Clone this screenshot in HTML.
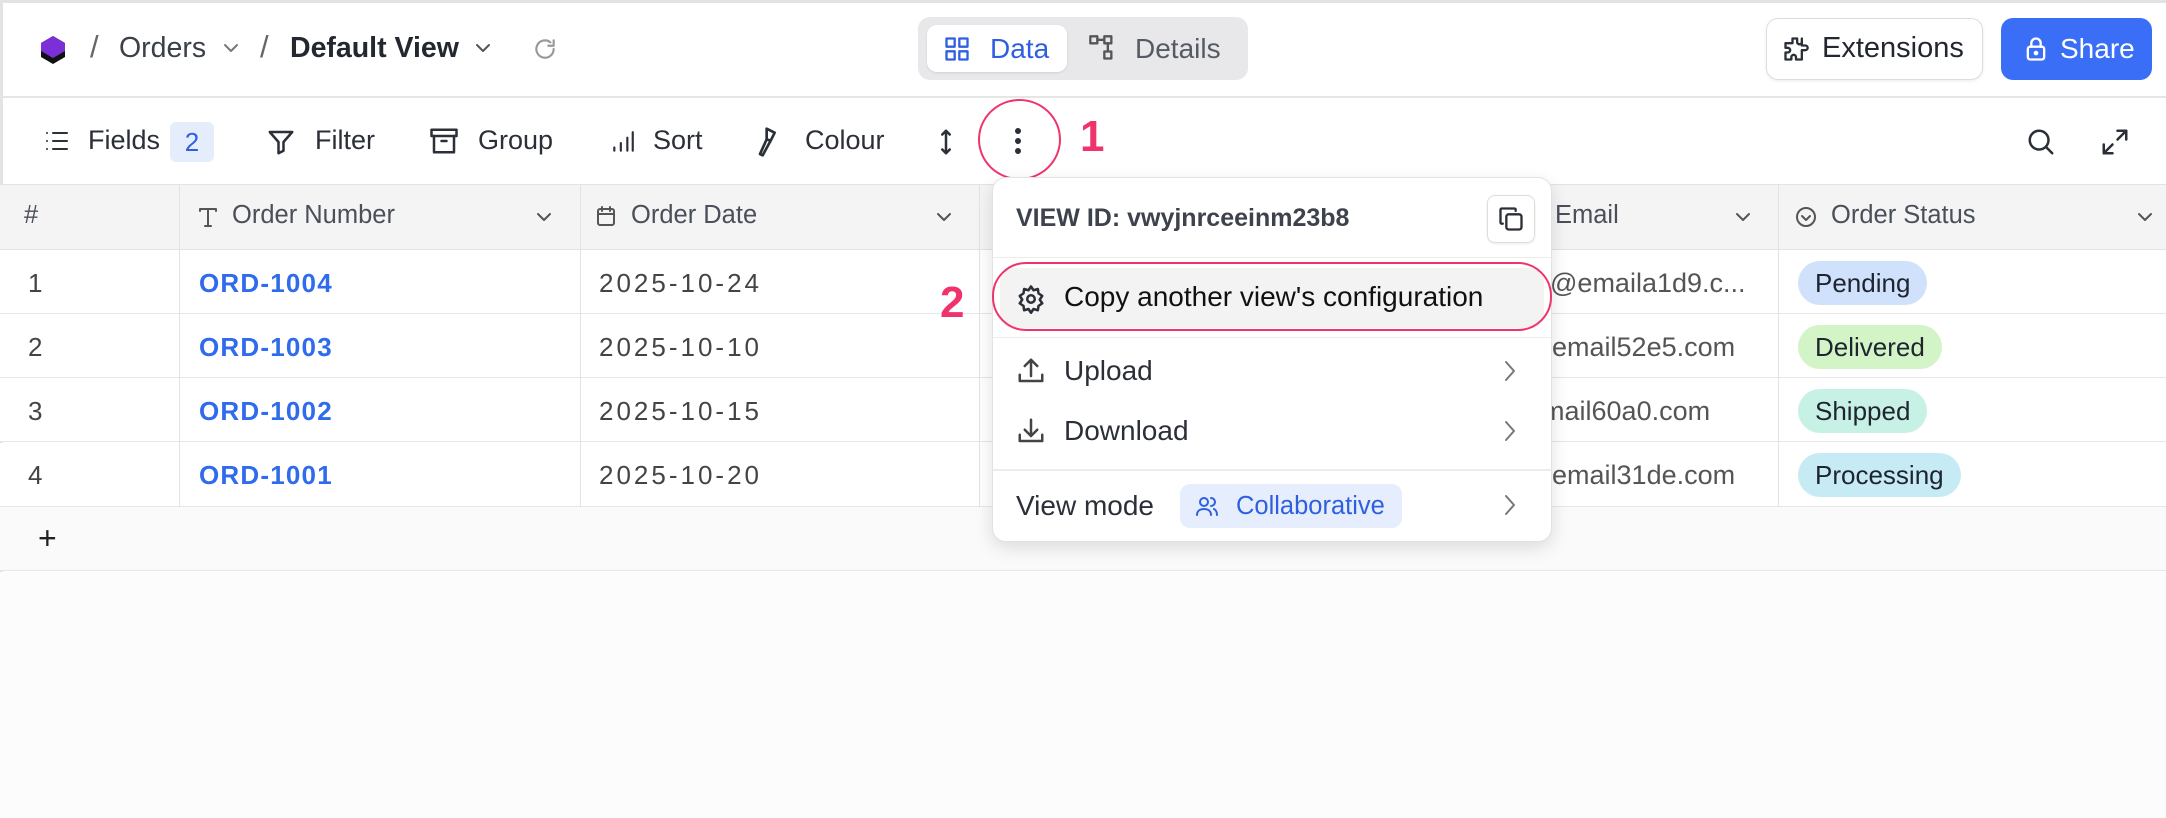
<!DOCTYPE html>
<html><head><meta charset="utf-8"><style>
*{box-sizing:border-box;margin:0;padding:0}
body{width:2166px;height:818px;overflow:hidden;background:#fff;font-family:"Liberation Sans",sans-serif;color:#2b2f38;position:relative}
.a{position:absolute;white-space:nowrap}
svg{position:absolute;fill:none;stroke:#2b2f38;stroke-width:2;stroke-linecap:round;stroke-linejoin:round}
.t{font-size:27px;top:125px}
.h{font-size:25.5px;color:#4a4f5a;top:201px}
.row{position:absolute;left:0;width:2166px;height:64px;border-bottom:1px solid #e6e6e6;background:#fff}
.c{font-size:26px}
.pill{position:absolute;left:1798px;height:44px;border-radius:22px;font-size:26px;line-height:44px;padding:0 17px;color:#1e2430}
</style></head><body>
<div class="a" style="left:0;top:0;width:2166px;height:3px;background:#e3e3e3"></div>
<div class="a" style="left:0;top:0;width:3px;height:818px;background:#e3e3e3"></div>
<!-- top bar -->
<svg style="left:38px;top:34px" width="30" height="32" viewBox="0 0 30 32"><path d="M15 2 L27 9 L27 23 L15 30 L3 23 L3 9Z" fill="#111" stroke="none"/><path d="M15 2 L27 9 L27 17 L15 24 L3 17 L3 9Z" fill="#7b2fd6" stroke="none"/></svg>
<div class="a" style="left:90px;top:29px;font-size:31px;color:#666">/</div>
<div class="a" style="left:119px;top:32px;font-size:28.5px;color:#3a3f48">Orders</div>
<svg style="left:222px;top:42px" width="18" height="12"><path d="M3 3l6 6 6-6" stroke="#777"/></svg>
<div class="a" style="left:260px;top:29px;font-size:31px;color:#666">/</div>
<div class="a" style="left:290px;top:32px;font-size:28.5px;font-weight:bold;color:#23272f">Default View</div>
<svg style="left:474px;top:42px" width="18" height="12"><path d="M3 3l6 6 6-6" stroke="#555"/></svg>
<svg style="left:532px;top:36px" width="26" height="26" viewBox="0 0 24 24"><path d="M20 12a8 8 0 1 1-3-6.2M20 4v5h-5" stroke="#999"/></svg>
<div class="a" style="left:918px;top:17px;width:330px;height:63px;border-radius:12px;background:#e8e8ea"></div>
<div class="a" style="left:927px;top:25px;width:140px;height:47px;border-radius:10px;background:#fff;box-shadow:0 1px 2px rgba(0,0,0,.1)"></div>
<svg style="left:943px;top:35px" width="28" height="28" viewBox="0 0 24 24"><rect x="3" y="3" width="7" height="7" stroke="#3060e0"/><rect x="14" y="3" width="7" height="7" stroke="#3060e0"/><rect x="3" y="14" width="7" height="7" stroke="#3060e0"/><rect x="14" y="14" width="7" height="7" stroke="#3060e0"/></svg>
<div class="a" style="left:990px;top:33px;font-size:28px;color:#2e5fe0">Data</div>
<svg style="left:1088px;top:34px" width="28" height="28" viewBox="0 0 24 24"><rect x="2" y="2" width="6" height="6" stroke="#555"/><rect x="14" y="2" width="6" height="6" stroke="#555"/><rect x="14" y="15" width="6" height="6" stroke="#555"/><path d="M8 5h6M17 8v7" stroke="#555"/></svg>
<div class="a" style="left:1135px;top:33px;font-size:28px;color:#555a64">Details</div>
<div class="a" style="left:1766px;top:18px;width:217px;height:62px;border:1px solid #ddd;border-radius:12px;box-shadow:0 1px 3px rgba(0,0,0,.08)"></div>
<svg style="left:1782px;top:35px" width="28" height="28" viewBox="0 0 24 24"><path d="M9 3h4v3a2 2 0 1 0 4 0V3h0v6h3a2 2 0 1 1 0 4h-3v8h-5v-2a2 2 0 1 0-4 0v2H3v-6h2a2 2 0 1 0 0-4H3V7h6z"/></svg>
<div class="a" style="left:1822px;top:32px;font-size:29px;color:#23272f">Extensions</div>
<div class="a" style="left:2001px;top:18px;width:151px;height:62px;background:#3a6ef7;border-radius:12px"></div>
<svg style="left:2024px;top:35px" width="24" height="28" viewBox="0 0 20 24"><rect x="3" y="10" width="14" height="11" rx="2" stroke="#fff"/><path d="M6 10V7a4 4 0 0 1 8 0v3" stroke="#fff"/><circle cx="10" cy="15.5" r="1" fill="#fff" stroke="#fff"/></svg>
<div class="a" style="left:2060px;top:33px;font-size:28px;color:#fff">Share</div>
<div class="a" style="left:0;top:96px;width:2166px;height:2px;background:#e5e5e5"></div>
<!-- toolbar -->
<svg style="left:44px;top:129px" width="26" height="24" viewBox="0 0 26 24"><path d="M3 4h0M3 12h0M3 20h0M9 4h14M9 12h14M9 20h14"/></svg>
<div class="a t" style="left:88px">Fields</div>
<div class="a" style="left:170px;top:122px;width:44px;height:40px;background:#e5edfd;border-radius:6px;color:#2e5fe0;font-size:26px;text-align:center;line-height:40px">2</div>
<svg style="left:266px;top:127px" width="30" height="30" viewBox="0 0 24 24"><path d="M3 4h18l-7 8v7l-4 2v-9z"/></svg>
<div class="a t" style="left:315px">Filter</div>
<svg style="left:428px;top:126px" width="32" height="30" viewBox="0 0 24 24"><rect x="2" y="3" width="20" height="5"/><path d="M4 8v13h16V8M10 12h4"/></svg>
<div class="a t" style="left:478px">Group</div>
<svg style="left:610px;top:127px" width="26" height="30" viewBox="0 0 24 24"><path d="M4 20v-3M10 20v-7M16 20V8M21 20V3"/></svg>
<div class="a t" style="left:653px">Sort</div>
<svg style="left:756px;top:125px" width="32" height="34" viewBox="0 0 24 24"><path d="M8 2l6 3-3 6-3-1zM11 11l-6 11-2-1 5-11"/></svg>
<div class="a t" style="left:805px">Colour</div>
<svg style="left:938px;top:127px" width="16" height="30" viewBox="0 0 12 24"><path d="M6 3v18M3 6l3-3 3 3M3 18l3 3 3-3"/></svg>
<div class="a" style="left:978px;top:99px;width:83px;height:81px;border:2px solid #f0336a;border-radius:50%"></div>
<div class="a" style="left:1015px;top:128px;width:6px;height:6px;border-radius:3px;background:#2b2f38"></div>
<div class="a" style="left:1015px;top:138px;width:6px;height:6px;border-radius:3px;background:#2b2f38"></div>
<div class="a" style="left:1015px;top:148px;width:6px;height:6px;border-radius:3px;background:#2b2f38"></div>
<div class="a" style="left:1080px;top:112px;font-size:44px;font-weight:bold;color:#f0336a;text-shadow:2px 2px 0 #fff,-2px -2px 0 #fff">1</div>
<svg style="left:2026px;top:127px" width="30" height="30" viewBox="0 0 24 24"><circle cx="10.5" cy="10.5" r="7.5"/><path d="M16 16l5 5"/></svg>
<svg style="left:2100px;top:127px" width="30" height="30" viewBox="0 0 24 24"><path d="M14 3h7v7M21 3l-7 7M10 21H3v-7M3 21l7-7"/></svg>
<!-- table header -->
<div class="a" style="left:0;top:184px;width:2166px;height:66px;background:#f4f4f5;border-top:1px solid #e3e3e3;border-bottom:1px solid #e3e3e3"></div>
<div class="a h" style="left:24px">#</div>
<svg style="left:196px;top:204px" width="24" height="26" viewBox="0 0 24 24"><path d="M4 4h16M12 4v17M9 21h6M4 4v2M20 4v2" stroke="#555"/></svg>
<div class="a h" style="left:232px">Order Number</div>
<svg style="left:535px;top:211px" width="18" height="12"><path d="M3 3l6 6 6-6" stroke="#555"/></svg>
<svg style="left:594px;top:202px" width="24" height="28" viewBox="0 0 24 24"><rect x="4" y="5" width="16" height="16" rx="2" stroke="#555"/><path d="M4 10h16M8 3v4M16 3v4" stroke="#555"/></svg>
<div class="a h" style="left:631px">Order Date</div>
<svg style="left:935px;top:211px" width="18" height="12"><path d="M3 3l6 6 6-6" stroke="#555"/></svg>
<div class="a h" style="left:1555px">Email</div>
<svg style="left:1734px;top:211px" width="18" height="12"><path d="M3 3l6 6 6-6" stroke="#555"/></svg>
<svg style="left:1794px;top:205px" width="24" height="24" viewBox="0 0 24 24"><circle cx="12" cy="12" r="9" stroke="#555"/><path d="M8 11l4 4 4-4" stroke="#555"/></svg>
<div class="a h" style="left:1831px">Order Status</div>
<svg style="left:2136px;top:211px" width="18" height="12"><path d="M3 3l6 6 6-6" stroke="#555"/></svg>
<!-- rows -->
<div class="row" style="top:250px"></div><div class="row" style="top:314px"></div><div class="row" style="top:378px"></div><div class="row" style="top:443px"></div>
<div class="row" style="top:507px;background:#fafafa"></div>
<div class="a" style="left:0;top:572px;width:2166px;height:246px;background:#fcfcfc"></div>
<div class="a" style="left:179px;top:184px;width:1px;height:323px;background:#e3e3e3"></div>
<div class="a" style="left:580px;top:184px;width:1px;height:323px;background:#e3e3e3"></div>
<div class="a" style="left:979px;top:184px;width:1px;height:323px;background:#e3e3e3"></div>
<div class="a" style="left:1778px;top:184px;width:1px;height:323px;background:#e3e3e3"></div>
<div class="a c" style="left:28px;top:268px;color:#444">1</div>
<div class="a c" style="left:28px;top:332px;color:#444">2</div>
<div class="a c" style="left:28px;top:396px;color:#444">3</div>
<div class="a c" style="left:28px;top:460px;color:#444">4</div>
<div class="a c" style="left:199px;top:268px;color:#2f6bed;font-weight:bold;letter-spacing:1.2px">ORD-1004</div>
<div class="a c" style="left:199px;top:332px;color:#2f6bed;font-weight:bold;letter-spacing:1.2px">ORD-1003</div>
<div class="a c" style="left:199px;top:396px;color:#2f6bed;font-weight:bold;letter-spacing:1.2px">ORD-1002</div>
<div class="a c" style="left:199px;top:460px;color:#2f6bed;font-weight:bold;letter-spacing:1.2px">ORD-1001</div>
<div class="a c" style="left:599px;top:268px;color:#444;letter-spacing:3px">2025-10-24</div>
<div class="a c" style="left:599px;top:332px;color:#444;letter-spacing:3px">2025-10-10</div>
<div class="a c" style="left:599px;top:396px;color:#444;letter-spacing:3px">2025-10-15</div>
<div class="a c" style="left:599px;top:460px;color:#444;letter-spacing:3px">2025-10-20</div>
<div class="a c" style="left:1535px;top:268px;color:#555;font-size:27px">a@emaila1d9.c...</div>
<div class="a c" style="left:1537px;top:332px;color:#555;font-size:27px">pemail52e5.com</div>
<div class="a c" style="left:1527px;top:396px;color:#555;font-size:27px">email60a0.com</div>
<div class="a c" style="left:1537px;top:460px;color:#555;font-size:27px">pemail31de.com</div>
<div class="pill" style="top:261px;background:#d0e1fb">Pending</div>
<div class="pill" style="top:325px;background:#d3f4c6">Delivered</div>
<div class="pill" style="top:389px;background:#c8f1e6">Shipped</div>
<div class="pill" style="top:453px;background:#c6ebf5">Processing</div>
<div class="a" style="left:38px;top:520px;font-size:32px;color:#222">+</div>
<!-- dropdown -->
<div class="a" style="left:992px;top:177px;width:560px;height:365px;background:#fff;border:1px solid #e2e2e2;border-radius:14px;box-shadow:0 6px 18px rgba(0,0,0,.12)"></div>
<div class="a" style="left:1016px;top:204px;font-size:25px;font-weight:bold;color:#3d424c">VIEW ID: vwyjnrceeinm23b8</div>
<div class="a" style="left:1487px;top:195px;width:48px;height:48px;border:1px solid #ddd;border-radius:8px;box-shadow:0 1px 2px rgba(0,0,0,.08)"></div>
<svg style="left:1497px;top:205px" width="28" height="28" viewBox="0 0 24 24"><rect x="8" y="8" width="13" height="13" rx="2"/><path d="M5 16H4a1 1 0 0 1-1-1V4a1 1 0 0 1 1-1h11a1 1 0 0 1 1 1v1"/></svg>
<div class="a" style="left:993px;top:257px;width:558px;height:1px;background:#ececec"></div>
<div class="a" style="left:1000px;top:268px;width:544px;height:60px;background:#f3f3f4;border-radius:12px"></div>
<div class="a" style="left:992px;top:262px;width:560px;height:69px;border:2px solid #f0336a;border-radius:34px"></div>
<svg style="left:1016px;top:284px" width="30" height="30" viewBox="0 0 24 24"><circle cx="12" cy="12" r="3"/><path d="M12 2l2 3 3.5-1 .5 3.5 3 2-2 3 2 3-3 2-.5 3.5-3.5-1-2 3-2-3-3.5 1-.5-3.5-3-2 2-3-2-3 3-2 .5-3.5 3.5 1z"/></svg>
<div class="a" style="left:1064px;top:281px;font-size:28px;color:#111">Copy another view's configuration</div>
<div class="a" style="left:940px;top:278px;font-size:44px;font-weight:bold;color:#f0336a;text-shadow:2px 2px 0 #fff,-2px -2px 0 #fff">2</div>
<div class="a" style="left:993px;top:337px;width:558px;height:1px;background:#ececec"></div>
<svg style="left:1016px;top:356px" width="30" height="30" viewBox="0 0 24 24"><path d="M3 15v5h18v-5M12 16V3M7 8l5-5 5 5" stroke="#444"/></svg>
<div class="a" style="left:1064px;top:355px;font-size:28px;color:#2b2f38">Upload</div>
<svg style="left:1502px;top:358px" width="16" height="26"><path d="M4 4l8 9-8 9" stroke="#777"/></svg>
<svg style="left:1016px;top:416px" width="30" height="30" viewBox="0 0 24 24"><path d="M3 15v5h18v-5M12 3v13M7 11l5 5 5-5" stroke="#444"/></svg>
<div class="a" style="left:1064px;top:415px;font-size:28px;color:#2b2f38">Download</div>
<svg style="left:1502px;top:418px" width="16" height="26"><path d="M4 4l8 9-8 9" stroke="#777"/></svg>
<div class="a" style="left:993px;top:469px;width:558px;height:2px;background:#ececec"></div>
<div class="a" style="left:1016px;top:490px;font-size:28px;color:#2b2f38">View mode</div>
<div class="a" style="left:1180px;top:484px;width:222px;height:44px;background:#e6eefd;border-radius:10px"></div>
<svg style="left:1194px;top:494px" width="26" height="24" viewBox="0 0 24 24"><circle cx="9" cy="8" r="4" stroke="#2e5fe0"/><path d="M2 21c0-4 3-6 7-6s7 2 7 6M16 4a4 4 0 0 1 0 8M19 15c2 1 3 3 3 6" stroke="#2e5fe0"/></svg>
<div class="a" style="left:1236px;top:492px;font-size:25.5px;color:#2e5fe0">Collaborative</div>
<svg style="left:1502px;top:492px" width="16" height="26"><path d="M4 4l8 9-8 9" stroke="#777"/></svg>
</body></html>
